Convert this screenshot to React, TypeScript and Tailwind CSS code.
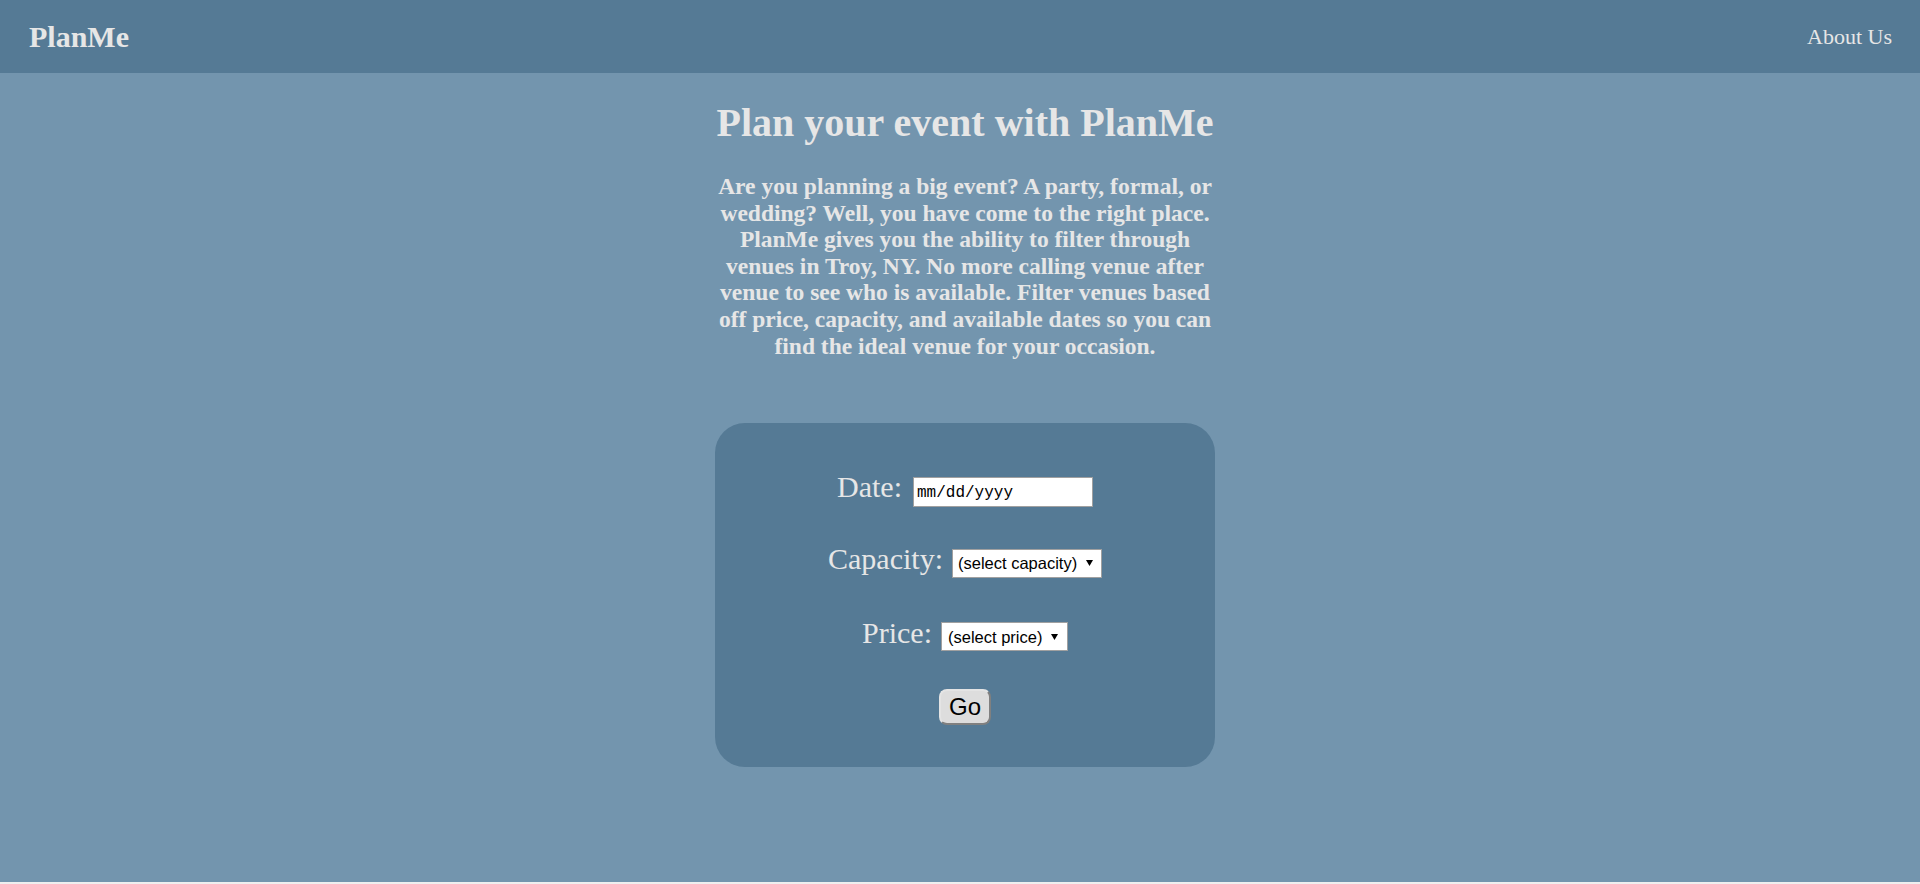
import React from "react";

function Caret() {
  return (
    <svg width="7" height="6" viewBox="0 0 7 6" className="shrink-0">
      <polygon points="0,0 7,0 3.5,6" fill="#000" />
    </svg>
  );
}

export default function App() {
  const serif = { fontFamily: '"Liberation Serif", "Times New Roman", serif' };
  return (
    <div className="min-h-screen bg-[#efefef]">
      <div className="h-[882px] bg-[#7395ae] text-[#e6e6e6]" style={serif}>
        <header className="h-[73px] bg-[#557a95] flex items-center justify-between pl-[29px] pr-[28px]">
          <div className="text-[30px] font-bold">PlanMe</div>
          <div className="text-[22px]">About Us</div>
        </header>

        <div className="flex flex-col items-center pl-[10px]">
          <h1 className="mt-[27px] text-[40px] leading-[46px] font-bold text-center">
            Plan your event with PlanMe
          </h1>
          <p className="mt-[27px] w-[510px] text-[23.5px] leading-[26.6px] font-bold text-center">
            Are you planning a big event? A party, formal, or wedding? Well, you have come to the right place.
            PlanMe gives you the ability to filter through venues in Troy, NY. No more calling venue after venue
            to see who is available. Filter venues based off price, capacity, and available dates so you can find
            the ideal venue for your occasion.
          </p>

          <div className="mt-[64px] w-[500px] h-[344px] bg-[#557a95] rounded-[30px] flex flex-col items-center pt-[47px]">
            <div className="flex items-baseline gap-[11px]">
              <span className="text-[30px] leading-[34px]">Date:</span>
              <div
                className="w-[180px] h-[30px] bg-white border border-[#a0a0a0] pl-[3px] pt-[3px] text-[16px] leading-[24px] text-black"
                style={{ fontFamily: '"Liberation Mono", "Courier New", monospace' }}
              >
                mm/dd/yyyy
              </div>
            </div>

            <div className="mt-[35px] flex items-baseline gap-[9px]">
              <span className="text-[30px] leading-[34px]">Capacity:</span>
              <div
                className="w-[150px] h-[29px] bg-white border border-[#a0a0a0] pl-[5px] pr-[8px] text-[16.5px] leading-[26px] text-black flex items-center justify-between"
                style={{ fontFamily: '"Liberation Sans", Arial, sans-serif' }}
              >
                <span className="leading-[26px]">(select capacity)</span>
                <Caret />
              </div>
            </div>

            <div className="mt-[38px] flex items-baseline gap-[9px]">
              <span className="text-[30px] leading-[34px]">Price:</span>
              <div
                className="w-[127px] h-[29px] bg-white border border-[#a0a0a0] pl-[6px] pr-[9px] text-[16.5px] leading-[26px] text-black flex items-center justify-between"
                style={{ fontFamily: '"Liberation Sans", Arial, sans-serif' }}
              >
                <span className="leading-[26px]">(select price)</span>
                <Caret />
              </div>
            </div>

            <button
              className="mt-[38px] w-[52px] h-[36px] bg-[#dddddd] rounded-[8px] border-2 border-t-[#e4e4e4] border-l-[#e4e4e4] border-r-[#808080] border-b-[#808080] text-[24px] leading-[28px] text-black flex items-center justify-center"
              style={{ fontFamily: '"Liberation Sans", Arial, sans-serif' }}
            >
              Go
            </button>
          </div>
        </div>
      </div>
    </div>
  );
}
